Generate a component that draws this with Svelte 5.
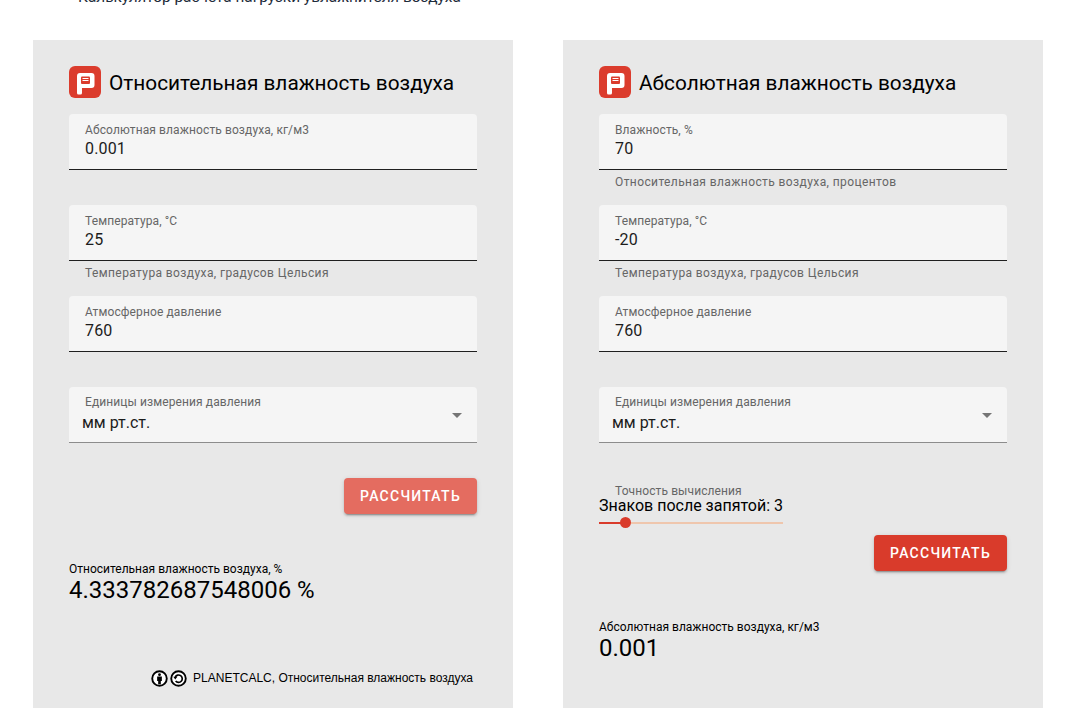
<script>
  const left = [
    { label: 'Абсолютная влажность воздуха, кг/м3', value: '0.001', help: '' },
    { label: 'Температура, °C', value: '25', help: 'Температура воздуха, градусов Цельсия' },
    { label: 'Атмосферное давление', value: '760', help: '' }
  ];
  const right = [
    { label: 'Влажность, %', value: '70', help: 'Относительная влажность воздуха, процентов' },
    { label: 'Температура, °C', value: '-20', help: 'Температура воздуха, градусов Цельсия' },
    { label: 'Атмосферное давление', value: '760', help: '' }
  ];
</script>

{#snippet logo()}
  <svg class="logo" viewBox="0 0 32 32" aria-hidden="true">
    <rect width="32" height="32" rx="6" fill="#db3c2d" />
    <path d="M8 10a3 3 0 0 1 3-3h11.500a3 3 0 0 1 3 3v9a3 3 0 0 1-3 3H13v5a1.500 1.500 0 0 1-1.500 1.500H9.500A1.500 1.500 0 0 1 8 27Z" fill="#fff" />
    <rect x="12" y="10.500" width="9" height="7.500" rx="1" fill="#db3c2d" />
    <path d="M13.500 12.500h6M13.500 14.500h6" stroke="#fff" stroke-width="1" />
  </svg>
{/snippet}

{#snippet field(f)}
  <div class="field">
    <div class="box">
      <span class="label">{f.label}</span>
      <span class="value">{f.value}</span>
    </div>
    <div class="help">{f.help}</div>
  </div>
{/snippet}

{#snippet select()}
  <div class="select">
    <span class="label">Единицы измерения давления</span>
    <span class="selected">мм рт.ст.</span>
    <span class="arrow"></span>
  </div>
{/snippet}

<div class="page">
  <p class="intro">Калькулятор расчета нагрузки увлажнителя воздуха</p>
  <div class="cards">
    <section class="card">
      <h2>{@render logo()}<span class="title">Относительная влажность воздуха</span></h2>
      {#each left as f}{@render field(f)}{/each}
      {@render select()}
      <div class="actions first"><button class="pale">РАССЧИТАТЬ</button></div>
      <div class="result first-result">
        <div class="r-label">Относительная влажность воздуха, %</div>
        <div class="r-value">4.333782687548006 %</div>
      </div>
      <div class="credit">
        <svg class="cc" viewBox="0 0 18 18" aria-hidden="true">
          <circle cx="9" cy="9" r="7.700" fill="#fff" stroke="#000" stroke-width="2" />
          <circle cx="9" cy="4.900" r="1.500" fill="#000" />
          <path d="M6.500 7h5v4.600h-1.100V15H7.600v-3.400H6.500Z" fill="#000" />
        </svg>
        <svg class="cc" viewBox="0 0 18 18" aria-hidden="true">
          <circle cx="9" cy="9" r="7.700" fill="#fff" stroke="#000" stroke-width="2" />
          <path d="M5.600 7.400A3.900 3.900 0 1 1 6 11.600" fill="none" stroke="#000" stroke-width="1.800" />
          <path d="M3.500 7.200h4.200L5.600 10Z" fill="#000" />
        </svg>
        <span>PLANETCALC, Относительная влажность воздуха</span>
      </div>
    </section>

    <section class="card">
      <h2>{@render logo()}<span class="title">Абсолютная влажность воздуха</span></h2>
      {#each right as f}{@render field(f)}{/each}
      {@render select()}
      <div class="slider">
        <span class="label">Точность вычисления</span>
        <div class="s-text">Знаков после запятой: 3</div>
        <div class="track"><span class="done"></span><span class="thumb"></span></div>
      </div>
      <div class="actions second"><button>РАССЧИТАТЬ</button></div>
      <div class="result second-result">
        <div class="r-label">Абсолютная влажность воздуха, кг/м3</div>
        <div class="r-value">0.001</div>
      </div>
    </section>
  </div>
</div>

<style>
  :global(body) { margin: 0; background: #fff; }
  .page {
    height: 708px;
    overflow: hidden;
    font-family: Roboto, "Noto Sans", sans-serif;
    color: #000;
  }
  .intro {
    margin: -12px 0 0 78px;
    height: 52px;
    font-size: 15.400px;
    line-height: 19px;
    color: #1d2b3a;
  }
  .cards { display: flex; gap: 50px; padding-left: 33px; }
  .card {
    width: 480px;
    height: 700px;
    box-sizing: border-box;
    padding: 26px 36px 0;
    background: #e8e8e8;
    flex: none;
  }
  h2 {
    display: flex;
    align-items: center;
    gap: 8px;
    height: 32px;
    margin: 0 0 16px;
    font-size: 20.800px;
    font-weight: 400;
  }
  .title { padding-top: 2px; line-height: 30px; }
  .logo { width: 32px; height: 32px; flex: none; }
  .field { height: 91px; }
  .box, .select {
    position: relative;
    height: 56px;
    box-sizing: border-box;
    padding: 9px 16px 0;
    background: #f5f5f5;
    border-radius: 4px 4px 0 0;
    border-bottom: 1px solid #1f1f1f;
  }
  .select { padding-top: 8px; border-bottom-color: #8c8c8c; }
  .label {
    display: block;
    font-size: 12px;
    line-height: 15px;
    letter-spacing: 0.1px;
    color: #666;
  }
  .value {
    display: block;
    font-size: 16px;
    line-height: 19px;
    margin-top: 1px;
    letter-spacing: 0.15px;
    color: #1c1c1c;
  }
  .help {
    padding: 5px 16px 0;
    font-size: 12px;
    line-height: 14px;
    letter-spacing: 0.4px;
    color: #666;
  }
  .selected {
    display: block;
    margin: 3px 0 0 -3px;
    font-size: 16px;
    line-height: 19px;
    color: #1c1c1c;
  }
  .arrow {
    position: absolute;
    right: 15px;
    top: 26px;
    border: 5px solid transparent;
    border-top-color: #757575;
    border-bottom: 0;
  }
  .actions { display: flex; justify-content: flex-end; }
  .actions.first { margin-top: 35px; }
  .actions.second { margin-top: 11px; }
  button {
    width: 133px;
    height: 36px;
    padding: 0;
    border: 0;
    border-radius: 4px;
    background: #d93b2b;
    color: #fff;
    font: 500 14px/36px Roboto, sans-serif;
    letter-spacing: 1.25px;
    box-shadow: 0 3px 1px -2px rgba(0,0,0,.2), 0 2px 2px rgba(0,0,0,.14), 0 1px 5px rgba(0,0,0,.12);
  }
  button.pale { background: #e46c60; }
  .slider { margin-top: 41px; }
  .slider .label { padding-left: 16px; line-height: 14px; color: #666; }
  .s-text {
    margin-top: -2px;
    font-size: 16px;
    line-height: 19px;
  }
  .track {
    position: relative;
    width: 184px;
    height: 2px;
    margin-top: 7px;
    background: #efc6ad;
  }
  .done { position: absolute; left: 0; top: 0; width: 26px; height: 2px; background: #d93b2b; }
  .thumb {
    position: absolute;
    left: 21px;
    top: -5px;
    width: 11px;
    height: 11px;
    border-radius: 50%;
    background: #d93b2b;
  }
  .result { font-size: 12px; }
  .first-result { margin-top: 48px; }
  .second-result { margin-top: 49px; }
  .r-label { line-height: 14px; }
  .r-value {
    font-size: 24px;
    line-height: 28px;
    color: #000;
  }
  .credit {
    display: flex;
    align-items: center;
    justify-content: flex-end;
    gap: 2px;
    margin-top: 65px;
    padding-right: 4px;
    font-family: "Liberation Sans", Arial, sans-serif;
    font-size: 12px;
    line-height: 18px;
  }
  .credit span { margin-left: 4px; }
  .cc { width: 17px; height: 17px; flex: none; }
</style>
